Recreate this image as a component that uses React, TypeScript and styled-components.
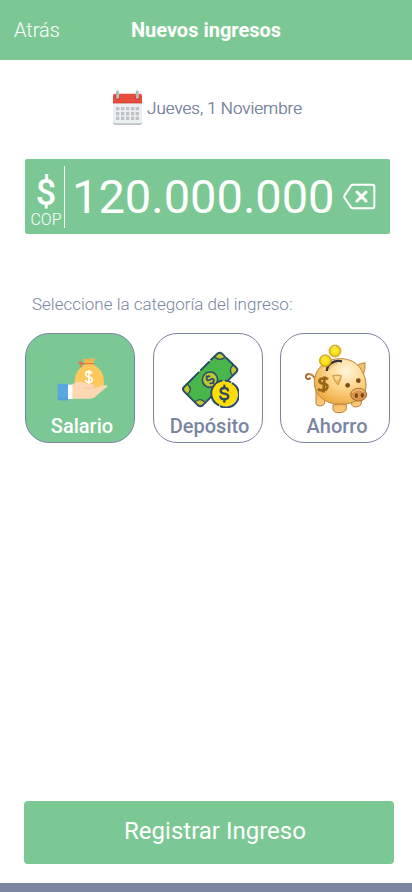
import React, { useState } from "react";
import styled, { createGlobalStyle } from "styled-components";

const green = "#7cc894";
const slate = "#7a869f";

const GlobalStyle = createGlobalStyle`
  *, *::before, *::after { box-sizing: border-box; }
  body {
    margin: 0;
    background: #fff;
    color: ${slate};
    font-family: Roboto, sans-serif;
  }
  button, input { font: inherit; color: inherit; }
  button { border: 0; background: none; padding: 0; cursor: pointer; }
  svg { display: block; flex: none; }
`;

const Screen = styled.div`
  display: flex;
  flex-direction: column;
  min-height: 100vh;
  border-bottom: 9px solid ${slate};
`;

const TopBar = styled.header`
  display: grid;
  grid-template-columns: 1fr auto 1fr;
  align-items: center;
  height: 60px;
  padding: 0 14px;
  background: ${green};
  color: #fff;
`;

const BackButton = styled.button`
  justify-self: start;
  font-size: 20px;
  font-weight: 300;
  line-height: 24px;
`;

const Title = styled.h1`
  margin: 0;
  font-size: 20px;
  font-weight: 700;
  line-height: 24px;
`;

const Content = styled.main`
  flex: 1;
  display: flex;
  flex-direction: column;
  padding: 30px 22px 0 25px;
`;

const DateRow = styled.div`
  display: flex;
  align-items: center;
  justify-content: center;
  gap: 5px;
  font-size: 17px;
  font-weight: 300;
  line-height: 24px;
  text-shadow: 0 0 0 ${slate};
`;

const AmountBox = styled.section`
  display: flex;
  align-items: center;
  height: 75px;
  margin-top: 34px;
  padding: 0 14px 0 0;
  border-radius: 2px;
  background: ${green};
  color: #fff;
`;

const Currency = styled.div`
  display: flex;
  flex-direction: column;
  align-items: center;
  width: 40px;
  height: 62px;
  padding: 6px 0 0 3px;
  border-right: 1px solid #fff;
`;

const CurrencySign = styled.span`
  font-size: 36px;
  font-weight: 500;
  line-height: 42px;
`;

const CurrencyCode = styled.span`
  font-size: 16px;
  font-weight: 300;
  line-height: 12px;
`;

const AmountInput = styled.input`
  flex: 1;
  min-width: 0;
  height: 60px;
  padding: 0 0 0 7px;
  border: 0;
  outline: 0;
  background: transparent;
  font-size: 47px;
`;

const EraseButton = styled.button`
  flex: none;
  margin-left: 4px;
`;

const Prompt = styled.h2`
  margin: 58px 0 17px 7px;
  font-size: 17px;
  font-weight: 300;
  line-height: 24px;
`;

const Categories = styled.div`
  display: flex;
  justify-content: space-between;
`;

const CategoryCard = styled.button<{ $selected: boolean }>`
  display: flex;
  flex-direction: column;
  align-items: center;
  width: 110px;
  height: 110px;
  padding: 10px 0 4px 4px;
  border: 1px solid ${slate};
  border-radius: 24px;
  background: ${(p) => (p.$selected ? green : "#fff")};
  color: ${(p) => (p.$selected ? "#fff" : slate)};
`;

const CategoryArt = styled.span`
  flex: 1;
  min-height: 0;
  display: flex;
  align-items: center;
`;

const CategoryName = styled.span`
  font-size: 20px;
  font-weight: 500;
  line-height: 24px;
`;

const Footer = styled.footer`
  display: flex;
  padding: 0 18px 19px 24px;
`;

const SubmitButton = styled.button`
  flex: 1;
  height: 63px;
  padding: 0 0 4px 12px;
  border-radius: 4px;
  background: ${green};
  color: #fff;
  font-size: 24px;
`;

const CalendarIcon = () => (
  <svg width="29" height="35" viewBox="24 15 87 105" aria-hidden="true">
    <rect x="24" y="32" width="87" height="88" rx="7" fill="#bdc3c7" />
    <path d="M24 52h87v57q0 6-6 6H30q-6 0-6-6z" fill="#ecf0f1" />
    <path d="M24 55V33q0-7 7-7h73q7 0 7 7v22z" fill="#e74c3c" />
    <path d="M24 52h87v3H24z" fill="#c0392b" opacity=".5" />
    <circle cx="38" cy="37" r="7" fill="#c0392b" />
    <circle cx="97" cy="37" r="7" fill="#c0392b" />
    <path d="M38 20v17M97 20v17" stroke="#bdc3c7" strokeWidth="9" strokeLinecap="round" />
    <path d="M36 20v15M95 20v15" stroke="#95a5a6" strokeWidth="3" strokeLinecap="round" opacity=".5" />
    <g fill="#bdc3c7">
      {[66, 81, 95].map((y) =>
        [33, 48, 63, 78, 92].map((x) => (
          <rect key={`${x}-${y}`} x={x} y={y} width="10" height="10" />
        ))
      )}
    </g>
  </svg>
);

const EraseIcon = () => (
  <svg width="33" height="27" viewBox="0 0 99 81" fill="none" stroke="#fff" aria-hidden="true">
    <path d="M29 5h59q6 0 6 6v59q0 6-6 6H29q-3 0-5-3L5 45q-3-4 0-8L24 8q2-3 5-3z" strokeWidth="6" strokeLinejoin="round" />
    <path d="M42 27l27 27M69 27L42 54" strokeWidth="9" strokeLinecap="round" />
  </svg>
);

const SalaryIcon = () => (
  <svg width="52" height="46" viewBox="108 84 156 138" aria-hidden="true">
    <path d="M190 92q18 3 34-1l-5 18q32 16 33 51 0 27-20 29h-48q-21-3-20-29 1-34 31-51z" fill="#fdc85c" />
    <path d="M190 92q18 3 34-1l-3 12q-14 3-27 0z" fill="#f3b64a" />
    <path d="M189 107h32M190 107q-16-9-12-2 5 5 12 2q-7 1-7 9" fill="none" stroke="#e87543" strokeWidth="4" strokeLinecap="round" />
    <path d="M216 137q-3-6-10-6-10 0-9 8 1 6 10 8 10 2 10 9-1 7-10 7-8 0-11-7M207 126v42" fill="none" stroke="#fff" strokeWidth="5" />
    <path d="M156 170q10-10 27-9 12 1 22 7h12q6 0 6 6 0 5-5 6 11 1 23-5 10-5 20-3 3 2-1 5l-35 30q-5 5-15 5h-54z" fill="#fdd7b2" />
    <path d="M192 178q7 4 25 3 7-1 7-6" fill="none" stroke="#f2bd91" strokeWidth="2" />
    <rect x="143" y="170" width="14" height="43" fill="#fff" />
    <rect x="113" y="167" width="31" height="50" rx="4" fill="#58a7df" />
    <path d="M113 205v8q0 4 4 4h23q4 0 4-4v-3h-17q-10 0-14-5z" fill="#4f9fda" />
  </svg>
);

const DepositIcon = () => (
  <svg width="58" height="57" viewBox="99 69 174 171" aria-hidden="true">
    <path d="M108 177L208 77q7-6 14 0l43 42q6 6 0 13L164 232q-7 5-14 0l-42-42q-6-7 0-13z" fill="#48b64b" />
    <path d="M200 85l8-8q7-6 14 0l10 10q-16 14-32-2zM256 110l9 9q6 6 0 13l-10 10q-17-15 1-32zM118 168l-10 9q-6 6 0 13l9 9q20-13 1-31zM140 222l10 10q7 5 14 0l9-9q-17-17-33-1z" fill="#bdca2f" />
    <g fill="none" stroke="#2e4c66" strokeWidth="6" strokeLinecap="round">
      <path d="M152 133l-44 44q-6 6 0 13l42 42q7 5 14 0l29-29M159 126l24-24M189 95l19-18q7-6 14 0l8 8M235 90l30 29q6 6 0 13l-25 25" />
      <path d="M200 87q16 14 32 0M256 110q-17 16-2 32M118 168q18 18 0 31M140 222q17-15 31 1" strokeWidth="4" />
    </g>
    <circle cx="186" cy="155" r="23" fill="#bdca2f" stroke="#2e4c66" strokeWidth="5" />
    <g transform="rotate(-45 186 155)" fill="none" stroke="#2e4c66" strokeWidth="5">
      <path d="M193 149q-1-5-7-5-7 0-7 5 0 4 7 6 8 2 8 7t-8 5q-7 0-8-6M186 138v6M186 166v7" />
    </g>
    <circle cx="230" cy="197" r="39" fill="#ffdc05" />
    <path d="M201 169a39 39 0 0 0 10 62M218 235a39 39 0 0 0 36-69M206 164q8-5 15-6M233 158q9 0 14 4" fill="none" stroke="#2e4c66" strokeWidth="6" strokeLinecap="round" />
    <path d="M240 187q-2-7-11-7-11 0-11 8 0 7 11 9 12 2 12 9-1 8-12 8-10 0-12-8M229 173v7M229 213v8" fill="none" stroke="#2e4c66" strokeWidth="7" strokeLinecap="round" />
  </svg>
);

const SavingsIcon = () => (
  <svg width="64" height="70" viewBox="90 48 192 210" aria-hidden="true">
    <defs>
      <radialGradient id="pigBody" cx="62%" cy="28%" r="72%">
        <stop offset="0" stopColor="#fff4dc" />
        <stop offset=".45" stopColor="#ffda94" />
        <stop offset="1" stopColor="#efad47" />
      </radialGradient>
      <linearGradient id="pigFoot" x1="0" y1="0" x2="0" y2="1">
        <stop offset="0" stopColor="#f3b95d" />
        <stop offset="1" stopColor="#ffcd80" />
      </linearGradient>
      <radialGradient id="pigCoin">
        <stop offset="0" stopColor="#fff33b" />
        <stop offset=".65" stopColor="#f8dc13" />
        <stop offset="1" stopColor="#cfa414" />
      </radialGradient>
    </defs>
    <g stroke="#b98340" strokeWidth="3">
      <path d="M123 185v42q1 7 13 7 12-1 13-9v-15z" fill="url(#pigFoot)" />
      <path d="M230 207v24q2 6 13 6 14-1 16-10v-25z" fill="url(#pigFoot)" />
    </g>
    <path d="M122 156q-8-19-22-18-10 3-7 11 5 7 12 2" fill="none" stroke="#a76d2e" strokeWidth="6" strokeLinecap="round" />
    <path d="M121 153q-9-19-21-15" fill="none" stroke="#e9ad57" strokeWidth="2" />
    <path d="M239 119q12-13 31-15 2 18-5 36z" fill="#f5c36c" stroke="#b98340" strokeWidth="3" />
    <path d="M118 163c0-39 32-70 75-71 30-1 55 12 67 35 8 14 14 30 13 47 0 34-36 55-77 55-44 0-78-27-78-66z" fill="url(#pigBody)" stroke="#b98340" strokeWidth="3" />
    <path d="M155 129q1-20 23-28 11-4 23-1" fill="none" stroke="#34313d" strokeWidth="7" />
    <path d="M162 127q4-16 24-20" fill="none" stroke="#d9a75b" strokeWidth="2" />
    <g fill="url(#pigCoin)" stroke="#c69d1b" strokeWidth="2">
      <circle cx="180" cy="69" r="18" />
      <circle cx="151" cy="98" r="18" />
    </g>
    <path d="M170 64q3-8 12-8M141 94q3-9 12-9" fill="none" stroke="#fff691" strokeWidth="3" />
    <path d="M159 154q-5-5-14-3-12 1-12 8 1 7 14 8 12 3 10 11-3 9-15 9-9 0-13-4M149 145l-4 49" fill="none" stroke="#9a6517" strokeWidth="8" />
    <path d="M173 143q13-4 26 0-2 17-10 28-11-10-16-28z" fill="#f3bd5d" stroke="#b77c31" strokeWidth="2" />
    <path d="M177 145h19q-4 8-10 12-7-4-9-12z" fill="#ffdc97" />
    <circle cx="218" cy="172" r="7" fill="#804719" />
    <circle cx="250" cy="158" r="7" fill="#804719" />
    <path d="M174 231v14q2 9 18 9 20-1 22-11v-14q-18-3-40 2z" fill="url(#pigFoot)" stroke="#b98340" strokeWidth="3" />
    <ellipse cx="251" cy="200" rx="24" ry="19" fill="#d8954b" stroke="#a66a30" strokeWidth="3" />
    <path d="M232 194q16-16 36-3" fill="none" stroke="#efb971" strokeWidth="5" />
    <ellipse cx="244" cy="203" rx="5" ry="7" fill="#80461b" />
    <ellipse cx="262" cy="202" rx="5" ry="7" fill="#80461b" />
  </svg>
);

const categories = [
  { name: "Salario", Icon: SalaryIcon },
  { name: "Depósito", Icon: DepositIcon },
  { name: "Ahorro", Icon: SavingsIcon },
];

const formatAmount = (text: string) =>
  text.replace(/\D/g, "").replace(/\B(?=(\d{3})+$)/g, ".");

export default function App() {
  const [amount, setAmount] = useState("120.000.000");
  const [category, setCategory] = useState("Salario");

  return (
    <Screen>
      <GlobalStyle />
      <TopBar>
        <BackButton type="button">Atrás</BackButton>
        <Title>Nuevos ingresos</Title>
      </TopBar>
      <Content>
        <DateRow>
          <CalendarIcon />
          <time>Jueves, 1 Noviembre</time>
        </DateRow>
        <AmountBox>
          <Currency>
            <CurrencySign>$</CurrencySign>
            <CurrencyCode>COP</CurrencyCode>
          </Currency>
          <AmountInput
            type="text"
            inputMode="numeric"
            aria-label="Monto del ingreso"
            value={amount}
            onChange={(e) => setAmount(formatAmount(e.target.value))}
          />
          <EraseButton
            type="button"
            aria-label="Borrar"
            onClick={() => setAmount(formatAmount(amount.slice(0, -1)))}
          >
            <EraseIcon />
          </EraseButton>
        </AmountBox>
        <Prompt id="category-prompt">Seleccione la categoría del ingreso:</Prompt>
        <Categories role="group" aria-labelledby="category-prompt">
          {categories.map(({ name, Icon }) => (
            <CategoryCard
              key={name}
              type="button"
              $selected={category === name}
              aria-pressed={category === name}
              onClick={() => setCategory(name)}
            >
              <CategoryArt>
                <Icon />
              </CategoryArt>
              <CategoryName>{name}</CategoryName>
            </CategoryCard>
          ))}
        </Categories>
      </Content>
      <Footer>
        <SubmitButton type="button">Registrar Ingreso</SubmitButton>
      </Footer>
    </Screen>
  );
}
